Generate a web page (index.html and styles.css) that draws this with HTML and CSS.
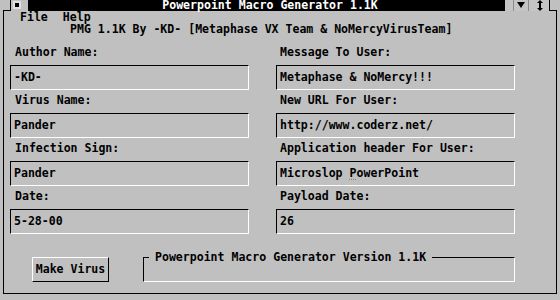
FILE: index.html
```html
<!DOCTYPE html>
<html>
<head>
<meta charset="utf-8">
<link rel="stylesheet" href="styles.css">
</head>
<body>
<div class="titlerow">
  <div class="notch"></div>
  <div class="sysbox"><span class="sysdot"></span></div>
  <div class="caption">Powerpoint Macro Generator 1.1K</div>
  <div class="ctrls">
    <span class="ctl-gap"></span>
    <span class="ctl ctl-down"><svg width="14" height="11" viewBox="0 0 14 11"><polygon points="3,2 11,2 7,8" fill="#000"/></svg></span>
    <span class="ctl ctl-size"><svg width="20" height="11" viewBox="0 0 20 11"><polygon points="11,0 14,3 8,3" fill="#000"/><rect x="10" y="3" width="2" height="5" fill="#000"/><polygon points="8,8 14,8 11,11" fill="#000"/></svg></span>
  </div>
  <div class="notch"></div>
</div>
<div class="frame">
  <div class="menubar"><span class="menu-item">File</span><span class="menu-item menu-help">Help</span></div>
  <div class="subtitle">PMG 1.1K By -KD- [Metaphase VX Team &amp; NoMercyVirusTeam]</div>
  <div class="fields">
    <div class="field"><div class="label">Author Name:</div><div class="box">-KD-</div></div>
    <div class="field field-r"><div class="label">Message To User:</div><div class="box">Metaphase &amp; NoMercy!!!</div></div>
    <div class="field"><div class="label">Virus Name:</div><div class="box">Pander</div></div>
    <div class="field field-r"><div class="label">New URL For User:</div><div class="box">http://www.coderz.net/</div></div>
    <div class="field"><div class="label">Infection Sign:</div><div class="box">Pander</div></div>
    <div class="field field-r"><div class="label">Application header For User:</div><div class="box">Microslop <span class="caret">P</span>owerPoint</div></div>
    <div class="field"><div class="label">Date:</div><div class="box">5-28-00</div></div>
    <div class="field field-r"><div class="label">Payload Date:</div><div class="box">26</div></div>
  </div>
  <div class="bottom">
    <div class="button">Make Virus</div>
    <div class="group"><span class="legend">Powerpoint Macro Generator Version 1.1K</span></div>
  </div>
</div>
</body>
</html>
```
FILE: styles.css
```css
* { box-sizing: border-box; }
html, body { margin: 0; padding: 0; }
body {
  background: #c0c0c0;
  width: 560px;
  height: 300px;
  overflow: hidden;
  font-family: "DejaVu Sans Mono", "Liberation Mono", monospace;
  font-weight: bold;
  font-size: 11.55px;
  color: #000;
}
.titlerow {
  display: flex;
  height: 11px;
  margin-left: 3px;
  width: 554px;
}
.notch {
  width: 7px;
  height: 11px;
  border-bottom: 1px solid #000;
}
.sysbox {
  width: 18px;
  height: 11px;
  border-left: 1px solid #000;
  display: flex;
  align-items: flex-start;
  padding: 1px 0 0 2px;
}
.sysdot {
  width: 8px;
  height: 8px;
  background: #fff;
  border: 2px solid #e0e0e0;
  display: flex;
  align-items: center;
  justify-content: center;
  position: relative;
}
.sysdot::after {
  content: "";
  width: 4px;
  height: 4px;
  background: #000;
}
.caption {
  width: 477px;
  height: 11px;
  background: #000;
  color: #fff;
  line-height: 11px;
  text-align: center;
  padding-left: 7px;
  white-space: nowrap;
}
.ctrls {
  width: 45px;
  height: 11px;
  display: flex;
  border-right: 1px solid #000;
  background: #c4c4c4;
}
.ctl-gap { width: 8px; }
.ctl {
  display: flex;
  height: 11px;
  border-left: 1px solid #8a8a8a;
}
.ctl-down { width: 15px; }
.ctl-size { width: 21px; }
.frame {
  margin-left: 3px;
  width: 554px;
  border-left: 1px solid #000;
  border-right: 1px solid #000;
  border-bottom: 1px solid #000;
  padding-bottom: 11px;
}
.menubar {
  height: 12px;
  line-height: 12px;
  padding-left: 16px;
  display: flex;
}
.menu-help { margin-left: 15px; }
.subtitle {
  height: 12px;
  line-height: 12px;
  padding-left: 66px;
  white-space: nowrap;
}
.fields {
  margin-top: 7px;
  padding-left: 6px;
  display: grid;
  grid-template-columns: 239px 239px;
  column-gap: 27px;
}
.field { height: 48px; }
.label {
  height: 23px;
  line-height: 20px;
  padding-bottom: 3px;
  padding-left: 5px;
  white-space: nowrap;
}
.field-r .label { padding-left: 4px; }
.box {
  height: 25px;
  line-height: 23px;
  border-top: 1px solid #000;
  border-left: 1px solid #000;
  border-right: 1px solid #fff;
  border-bottom: 1px solid #fff;
  padding-left: 3px;
  white-space: nowrap;
}
.caret {
  text-decoration: underline dotted #808080;
  text-underline-offset: 2px;
}
.bottom {
  margin-top: 23px;
  padding-left: 28px;
  display: flex;
  height: 25px;
}
.button {
  width: 77px;
  height: 25px;
  border-top: 1px solid #fff;
  border-left: 1px solid #fff;
  border-right: 1px solid #000;
  border-bottom: 1px solid #000;
  text-align: center;
  line-height: 23px;
}
.group {
  margin-left: 34px;
  width: 372px;
  height: 25px;
  border-top: 1px solid #000;
  border-left: 1px solid #000;
  border-right: 1px solid #fff;
  border-bottom: 1px solid #fff;
}
.legend {
  display: inline-block;
  margin-top: -7px;
  margin-left: 5px;
  padding: 0 6px;
  height: 12px;
  line-height: 12px;
  background: #c0c0c0;
  white-space: nowrap;
  vertical-align: top;
}
```
